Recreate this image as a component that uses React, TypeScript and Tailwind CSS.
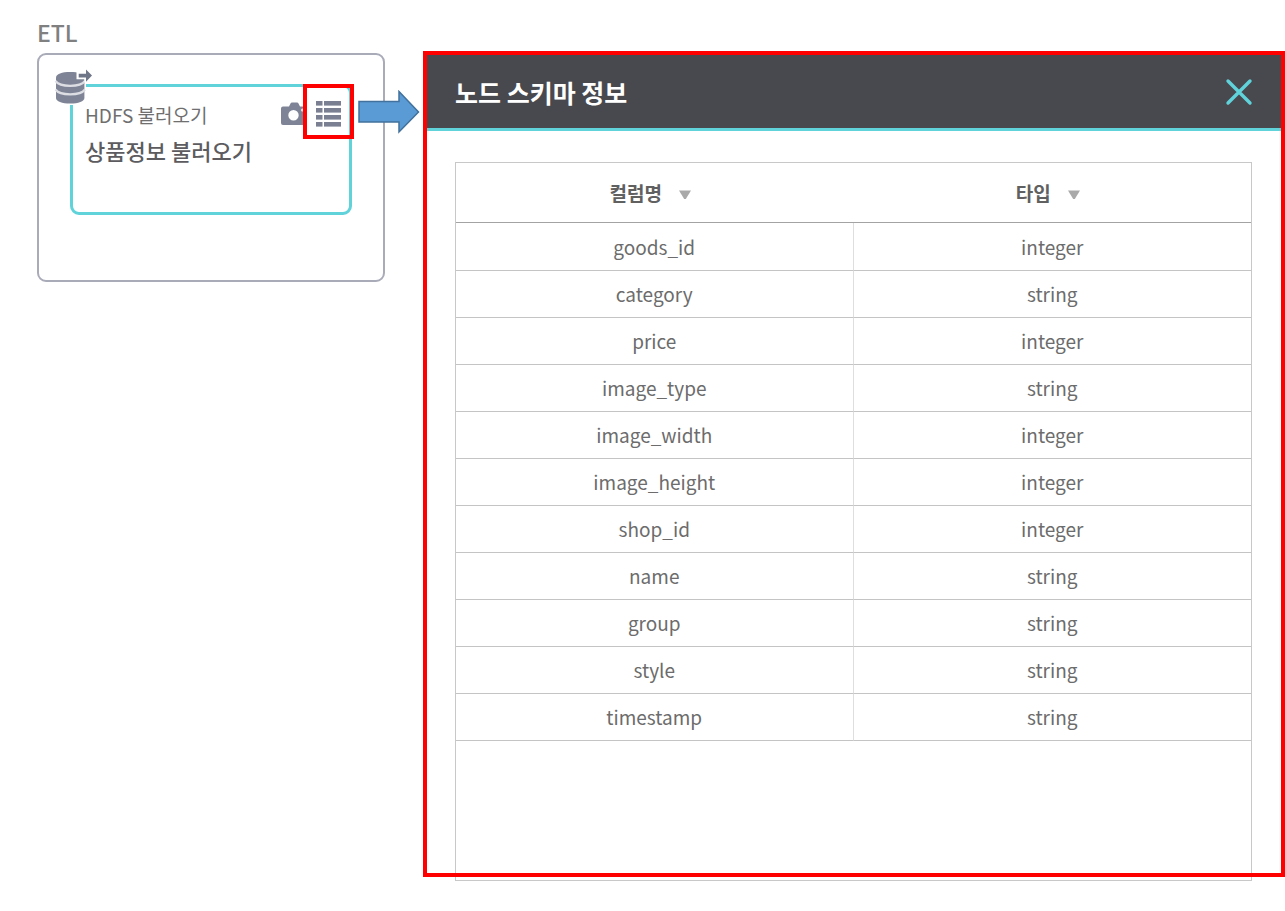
const columns = [
  { name: "goods_id", type: "integer" },
  { name: "category", type: "string" },
  { name: "price", type: "integer" },
  { name: "image_type", type: "string" },
  { name: "image_width", type: "integer" },
  { name: "image_height", type: "integer" },
  { name: "shop_id", type: "integer" },
  { name: "name", type: "string" },
  { name: "group", type: "string" },
  { name: "style", type: "string" },
  { name: "timestamp", type: "string" },
];

function DatabaseIcon() {
  return (
    <svg width="40" height="36" viewBox="0 0 40 36" className="block" aria-hidden="true">
      <path d="M0 0H32V36H0Z" fill="#fff" />
      <path
        d="M2 8.500C2 5 8 3 16.200 3S30.400 5 30.400 8.500V29c0 3.500-6 5.500-14.200 5.500S2 32.500 2 29Z"
        fill="#7e8496"
      />
      <g fill="none" stroke="#dcdee4" strokeWidth="2.200">
        <path d="M1.500 12C4 15.500 9.500 16.800 16.200 16.800S28.400 15.500 31 12" />
        <path d="M1.500 20.500C4 24 9.500 25.300 16.200 25.300S28.400 24 31 20.500" />
      </g>
      <path d="M22.500 2.700H30.500V0H33L39.500 6.500 33 13.500H30.500V10.300H22.500Z" fill="#fff" />
      <path d="M24.700 4.700H32V.4L38 6.600 32 12.800V8.400H24.700Z" fill="#6f7687" />
    </svg>
  );
}

function CameraIcon() {
  return (
    <svg width="26" height="24" viewBox="0 0 26 24" className="block" aria-hidden="true">
      <path
        fillRule="evenodd"
        fill="#7e8496"
        d="M2 4.500h6L9.500 1.500Q10 .5 11 .5h5q1 0 1.500 1L19 4.500h5q2 0 2 2V21q0 2-2 2H2q-2 0-2-2V6.500q0-2 2-2ZM12.500 8a5.200 5.200 0 1 0 0 10.400 5.200 5.200 0 0 0 0-10.400Z"
      />
      <circle cx="21.500" cy="8" r="1.500" fill="#e4e6ea" />
    </svg>
  );
}

function ListIcon() {
  return (
    <svg width="26" height="28" viewBox="0 0 26 28" className="block" fill="#7a8092" aria-hidden="true">
      {[1, 8, 15, 22].map((y) => (
        <g key={y}>
          <rect x="0" y={y} width="6.500" height="4.600" />
          <rect x="8" y={y} width="17" height="4.600" />
        </g>
      ))}
    </svg>
  );
}

function CalloutArrow() {
  return (
    <svg width="62" height="44" viewBox="0 0 62 44" className="block" aria-hidden="true">
      <path
        d="M1 11.500H41V1.500L60.500 22 41 42V32H1Z"
        fill="#5b9bd5"
        stroke="#41719c"
        strokeWidth="1.500"
      />
    </svg>
  );
}

function SortHeader({ label }: { label: string }) {
  return (
    <th scope="col" className="h-[60px] border-b border-[#a3a3a3] p-0 pr-2">
      <button
        type="button"
        className="inline-flex items-center gap-4 text-[19px] leading-7 font-bold text-[#606060]"
      >
        {label}
        <svg width="14" height="10" viewBox="0 0 14 10" className="mt-1" aria-hidden="true">
          <path d="M1 .5h12L7.800 9H6.200Z" fill="#a9a9a9" />
        </svg>
      </button>
    </th>
  );
}

export default function App() {
  return (
    <main className="flex items-start bg-white pt-[18px] pl-[37px] font-['Noto_Sans_CJK_KR',sans-serif]">
      <section className="w-[348px] shrink-0">
        <h2 className="h-[35px] text-[23px] leading-7 font-medium text-[#808080]">ETL</h2>
        <div className="rounded-[9px] border-2 border-[#a9acb8] px-[31px] pt-[29px] pb-[65px]">
          <article className="relative h-[131px] rounded-[9px] border-3 border-[#60d2da] px-3 pt-[14px]">
            <div className="absolute -top-[18px] -left-[19px]">
              <DatabaseIcon />
            </div>
            <p className="text-[19px] leading-7 text-[#6f6f6f]">HDFS 불러오기</p>
            <h3 className="mt-[7px] text-[22px] leading-7 font-medium text-[#5c5c60]">상품정보 불러오기</h3>
            <button type="button" aria-label="미리보기" className="absolute top-[15px] left-[208px]">
              <CameraIcon />
            </button>
            <div className="absolute -top-[3px] left-[230px] flex items-center gap-1">
              <button
                type="button"
                aria-label="스키마 정보"
                className="flex h-[55px] w-[51px] items-center justify-center border-4 border-[#f00] pt-1"
              >
                <ListIcon />
              </button>
              <CalloutArrow />
            </div>
          </article>
        </div>
      </section>

      <section className="relative mt-[33px] ml-[38px] min-w-0 flex-1 pt-1">
        <header className="flex h-[76px] items-center justify-between border-b-3 border-[#60d2da] bg-[#48494e] pr-8 pl-8">
          <h1 className="text-[25px] leading-9 font-bold text-white">노드 스키마 정보</h1>
          <button type="button" aria-label="닫기">
            <svg width="28" height="28" viewBox="0 0 28 28" className="block" aria-hidden="true">
              <path d="M3 3 25 25M25 3 3 25" stroke="#60d2da" strokeWidth="3.400" strokeLinecap="round" />
            </svg>
          </button>
        </header>
        <div className="pt-[31px] pr-[33px] pl-8">
          <div className="min-h-[719px] border border-[#c8c8c8]">
            <table className="w-full table-fixed border-separate border-spacing-0 text-center">
              <thead>
                <tr>
                  <SortHeader label="컬럼명" />
                  <SortHeader label="타입" />
                </tr>
              </thead>
              <tbody className="text-[19px] leading-7 text-[#6c6c6c]">
                {columns.map((column) => (
                  <tr key={column.name} className="h-[47px] first:h-12">
                    <td className="border-r border-b border-r-[#dedede] border-b-[#c4c4c4] p-0">{column.name}</td>
                    <td className="border-b border-[#c4c4c4] p-0">{column.type}</td>
                  </tr>
                ))}
              </tbody>
            </table>
          </div>
        </div>
        <div className="pointer-events-none absolute inset-x-0 top-0 bottom-1 border-4 border-[#f00]" />
      </section>
    </main>
  );
}
